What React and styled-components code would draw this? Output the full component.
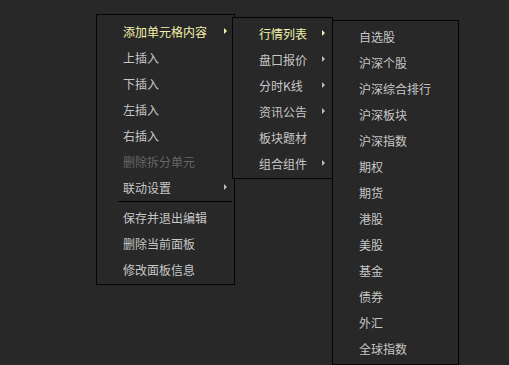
import React from "react";
import styled, { createGlobalStyle } from "styled-components";

const Global = createGlobalStyle`
  html, body {
    margin: 0;
    padding: 0;
    background: #272727;
  }
  * {
    box-sizing: border-box;
  }
`;

const Desktop = styled.div`
  position: relative;
  width: 509px;
  height: 365px;
  overflow: hidden;
  background: #272727;
  font-family: "Noto Sans CJK SC", "Noto Sans", sans-serif;
  font-size: 12px;
`;

const Menu = styled.ul`
  position: absolute;
  left: ${(p) => p.x}px;
  top: ${(p) => p.y}px;
  width: ${(p) => p.w}px;
  height: ${(p) => p.h}px;
  margin: 0;
  padding: ${(p) => p.pad}px 0 0;
  list-style: none;
  background: #282828;
  border: 1px solid #050505;
  display: flex;
  flex-direction: column;
`;

const Item = styled.li`
  display: flex;
  align-items: center;
  height: 26px;
  padding-left: ${(p) => p.indent}px;
  padding-right: 6px;
  color: ${(p) => (p.active ? "#f2f2a6" : p.disabled ? "#666666" : "#c6c6c6")};
  white-space: nowrap;
`;

const Label = styled.span`
  flex: 1;
`;

const Arrow = styled.span`
  width: 0;
  height: 0;
  border-top: 3px solid transparent;
  border-bottom: 3px solid transparent;
  border-left: 3px solid ${(p) => (p.active ? "#f2f2a6" : "#bdbdbd")};
  margin-right: 1px;
`;

const Separator = styled.li`
  height: 2px;
  margin: 1px 2px 1px 21px;
  border-top: 1px solid #050505;
`;

const mainItems = [
  { label: "添加单元格内容", sub: true, active: true },
  { label: "上插入" },
  { label: "下插入" },
  { label: "左插入" },
  { label: "右插入" },
  { label: "删除拆分单元", disabled: true },
  { label: "联动设置", sub: true },
  { sep: true },
  { label: "保存并退出编辑" },
  { label: "删除当前面板" },
  { label: "修改面板信息" },
];

const contentItems = [
  { label: "行情列表", sub: true, active: true },
  { label: "盘口报价", sub: true },
  { label: "分时K线", sub: true },
  { label: "资讯公告", sub: true },
  { label: "板块题材" },
  { label: "组合组件", sub: true },
];

const quoteItems = [
  "自选股",
  "沪深个股",
  "沪深综合排行",
  "沪深板块",
  "沪深指数",
  "期权",
  "期货",
  "港股",
  "美股",
  "基金",
  "债券",
  "外汇",
  "全球指数",
].map((label) => ({ label }));

function PopupMenu({ items, indent, ...pos }) {
  return (
    <Menu {...pos}>
      {items.map((it, i) =>
        it.sep ? (
          <Separator key={i} />
        ) : (
          <Item key={i} indent={indent} active={it.active} disabled={it.disabled}>
            <Label>{it.label}</Label>
            {it.sub && <Arrow active={it.active} />}
          </Item>
        )
      )}
    </Menu>
  );
}

export default function App() {
  return (
    <>
      <Global />
      <Desktop>
        <PopupMenu items={mainItems} indent={26} pad={3} x={96} y={14} w={139} h={271} />
        <PopupMenu items={contentItems} indent={26} pad={2} x={232} y={17} w={101} h={162} />
        <PopupMenu items={quoteItems} indent={26} pad={2} x={332} y={20} w={127} h={345} />
      </Desktop>
    </>
  );
}
